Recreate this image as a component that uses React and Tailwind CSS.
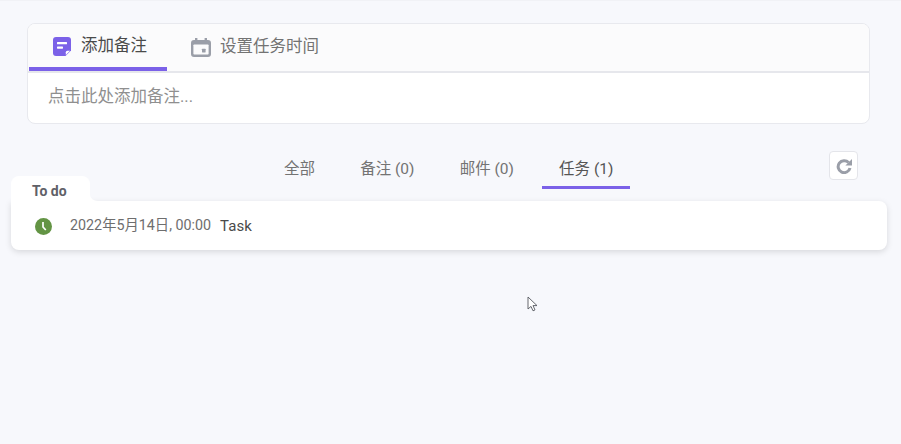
const font = { fontFamily: 'Roboto, "Noto Sans CJK SC", sans-serif' }

const filters = [
  { label: '全部' },
  { label: '备注 (0)' },
  { label: '邮件 (0)' },
  { label: '任务 (1)', active: true },
]

const NoteIcon = () => (
  <svg width="18" height="19" viewBox="0 0 18 19" className="shrink-0">
    <path d="M3 0h12a3 3 0 0 1 3 3v10.5L12.5 19H3a3 3 0 0 1-3-3V3a3 3 0 0 1 3-3z" fill="#7b61e8" />
    <rect x="4" y="5" width="10" height="2.3" rx="0.6" fill="#fff" />
    <rect x="4" y="9.4" width="6" height="2.3" rx="0.6" fill="#fff" />
    <path d="M12.8 18v-2.8a1.5 1.5 0 0 1 1.5-1.5H17z" fill="#fff" />
  </svg>
)

const CalendarIcon = () => (
  <svg width="20" height="19" viewBox="0 0 20 19" className="shrink-0">
    <path d="M4 0h2.4v2h7.2V0H16v2h1a3 3 0 0 1 3 3v11a3 3 0 0 1-3 3H3a3 3 0 0 1-3-3V5a3 3 0 0 1 3-3h1z" fill="#9a9ea8" />
    <rect x="2.4" y="6.4" width="15.2" height="10.2" rx="0.8" fill="#fbfbfc" />
    <rect x="11" y="10.8" width="3.6" height="3.6" rx="0.4" fill="#9a9ea8" />
  </svg>
)

const ClockIcon = () => (
  <svg width="17" height="17" viewBox="0 0 17 17" className="shrink-0">
    <circle cx="8.5" cy="8.5" r="8.5" fill="#639444" />
    <path d="M8 4v5l2.8 3" fill="none" stroke="#fff" strokeWidth="1.7" />
  </svg>
)

const RefreshIcon = () => (
  <svg width="16" height="16" viewBox="0 0 16 16">
    <path d="M12.6 4.6A6 6 0 1 0 14 10" fill="none" stroke="#9a9ea8" strokeWidth="3" />
    <path d="M16 1v6.6H9.4z" fill="#9a9ea8" />
  </svg>
)

const Cursor = () => (
  <svg width="11" height="16" viewBox="0 0 11 16" className="absolute left-[527px] top-[295px]">
    <path d="M1 1v12l3-2.6 2 4.4 2-.9-2-4.3h4z" fill="#fff" stroke="#55585f" strokeWidth="0.9" />
  </svg>
)

export default function App() {
  return (
    <div style={font} className="relative h-[444px] overflow-hidden bg-[#f7f8fc] pt-[23px] border-t border-[#f1f2f6]">
      <div className="mx-[27px] w-[843px] h-[101px] -mt-px rounded-lg border border-[#e8e9ee] bg-white overflow-hidden">
        <div className="flex h-[49px] bg-[#fbfbfc] border-b-2 border-[#e6e7ec]">
          <div className="flex items-center gap-[10px] w-[138px] h-[47px] pl-[24px] pt-[2px] ml-px border-b-[4px] border-[#7b61e8] text-[16.5px] text-[#4a4a4a]">
            <NoteIcon />
            <span>添加备注</span>
          </div>
          <div className="flex items-center gap-[9px] h-[47px] pl-[24px] pb-[1px] text-[16.5px] text-[#737373]">
            <CalendarIcon />
            <span>设置任务时间</span>
          </div>
        </div>
        <div className="pl-[20px] pt-[12px] text-[16.5px] text-[#8f8f8f]">点击此处添加备注...</div>
      </div>

      <div className="flex items-start mt-[27px] pl-[267px] pr-[43px] h-[38px]">
        <div className="flex gap-[11.2px]">
          {filters.map(f => (
            <div
              key={f.label}
              className={`h-[38px] px-[17px] pt-[7px] text-[15.5px] border-b-[3px] ${
                f.active ? 'border-[#7b61e8] text-[#555555]' : 'border-transparent text-[#737373]'
              }`}
            >
              {f.label}
            </div>
          ))}
        </div>
        <button className="ml-auto flex items-center justify-center w-[29px] h-[29px] rounded border border-[#e4e5ea] bg-white">
          <RefreshIcon />
        </button>
      </div>

      <div className="mx-[11px] w-[876px] -mt-[13px]">
        <div className="relative w-[79px] h-[28px] rounded-t-lg bg-white pl-[21px] pt-[5px] text-[14px] font-bold text-[#5f6168]">
          To do
          <svg width="8" height="6" viewBox="0 0 8 6" className="absolute left-[79px] bottom-[3px]">
            <path d="M0 0v6h8a8 6 0 0 1-8-6z" fill="#fff" />
          </svg>
        </div>
        <div className="-mt-[3px] h-[49px] flex items-center rounded-b-lg rounded-tr-lg bg-white pl-[24px] pt-[1px] shadow-[0_2px_6px_rgba(0,0,0,0.13)]">
          <ClockIcon />
          <span className="ml-[18px] text-[14.3px] text-[#6e6e6e]">2022年5月14日, 00:00</span>
          <span className="ml-[9px] text-[15px] text-[#4a4a4a]">Task</span>
        </div>
      </div>

      <Cursor />
    </div>
  )
}
